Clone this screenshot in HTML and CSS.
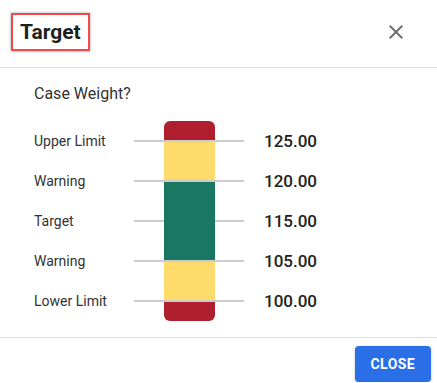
FILE: index.html
```html
<!DOCTYPE html>
<html lang="en">
<head>
    <meta charset="UTF-8">
    <meta name="viewport" content="width=device-width, initial-scale=1.0">
    <title>Target</title>
    <link rel="stylesheet" href="styles.css">
</head>
<body>
    <div class="dialog">
        <div class="header">
            <h2 class="title">Target</h2>
            <button class="close-icon" aria-label="close">
                <svg width="24" height="24" viewBox="0 0 24 24"><path d="M19 6.41 17.59 5 12 10.59 6.41 5 5 6.41 10.59 12 5 17.59 6.41 19 12 13.41 17.59 19 19 17.59 13.41 12z" fill="#707070"/></svg>
            </button>
        </div>
        <div class="content">
            <p class="question">Case Weight?</p>
            <div class="scale">
                <div class="bar">
                    <div class="seg red top"></div>
                    <div class="seg yellow"></div>
                    <div class="seg green"></div>
                    <div class="seg yellow"></div>
                    <div class="seg red bottom"></div>
                </div>

                <div class="label r1">Upper Limit</div>
                <div class="tick r1"></div>
                <div class="value r1">125.00</div>

                <div class="label r2">Warning</div>
                <div class="tick r2"></div>
                <div class="value r2">120.00</div>

                <div class="label r3">Target</div>
                <div class="tick r3"></div>
                <div class="value r3">115.00</div>

                <div class="label r4">Warning</div>
                <div class="tick r4"></div>
                <div class="value r4">105.00</div>

                <div class="label r5">Lower Limit</div>
                <div class="tick r5"></div>
                <div class="value r5">100.00</div>
            </div>
        </div>
        <div class="footer">
            <button class="close-btn">Close</button>
        </div>
    </div>
</body>
</html>
```

FILE: styles.css
```css
body {
    margin: 0;
    background: #ffffff;
    font-family: Roboto, "Liberation Sans", sans-serif;
    color: #222222;
}

.header {
    display: flex;
    align-items: center;
    justify-content: space-between;
    padding: 13px 29px 16px 11px;
    border-bottom: 1px solid #e0e0e0;
}

.title {
    margin: 0;
    font-size: 21px;
    line-height: 24px;
    font-weight: 700;
    color: #1f1f1f;
    padding: 5px 7px;
    border: 2px solid #f24a4a;
    box-shadow: 0 0 3px rgba(0, 0, 0, 0.35);
}

.close-icon {
    background: none;
    border: none;
    padding: 0;
    width: 24px;
    height: 24px;
    cursor: pointer;
}

.close-icon svg {
    display: block;
}

.content {
    padding: 16px 0 16px 34px;
}

.question {
    margin: 0 0 18px;
    font-size: 16px;
    line-height: 19px;
    color: #333333;
}

.scale {
    display: grid;
    grid-template-columns: 100px 110px auto;
    grid-template-rows: repeat(5, 40px);
    align-items: center;
}

.r1 { grid-row: 1; }
.r2 { grid-row: 2; }
.r3 { grid-row: 3; }
.r4 { grid-row: 4; }
.r5 { grid-row: 5; }

.label {
    grid-column: 1;
    font-size: 14px;
    color: #333333;
    line-height: 16px;
    margin-top: -1px;
}

.tick {
    grid-column: 2;
    height: 2px;
    background: #cccccc;
}

.value {
    grid-column: 3;
    padding-left: 20px;
    font-size: 17px;
    font-weight: 500;
    color: #222222;
}

.bar {
    grid-column: 2;
    grid-row: 1 / 6;
    align-self: stretch;
    justify-self: center;
    width: 51px;
    display: flex;
    flex-direction: column;
    gap: 2px;
    z-index: 1;
}

.seg.red { height: 19px; background: #b01f2e; }
.seg.yellow { height: 38px; background: #ffdb6b; }
.seg.green { height: 78px; background: #1a7761; }
.seg.top { border-radius: 6px 6px 0 0; }
.seg.bottom { border-radius: 0 0 6px 6px; }

.footer {
    display: flex;
    justify-content: flex-end;
    padding: 8px 6px 0 0;
    border-top: 1px solid #e0e0e0;
}

.close-btn {
    height: 36px;
    padding: 0 16px;
    border: none;
    border-radius: 4px;
    background: #2a6ee8;
    color: #ffffff;
    font-family: Roboto, "Liberation Sans", sans-serif;
    font-size: 14px;
    font-weight: 700;
    letter-spacing: 0.4px;
    text-transform: uppercase;
    box-shadow: 0 1px 3px rgba(0, 0, 0, 0.25);
    cursor: pointer;
}
```
